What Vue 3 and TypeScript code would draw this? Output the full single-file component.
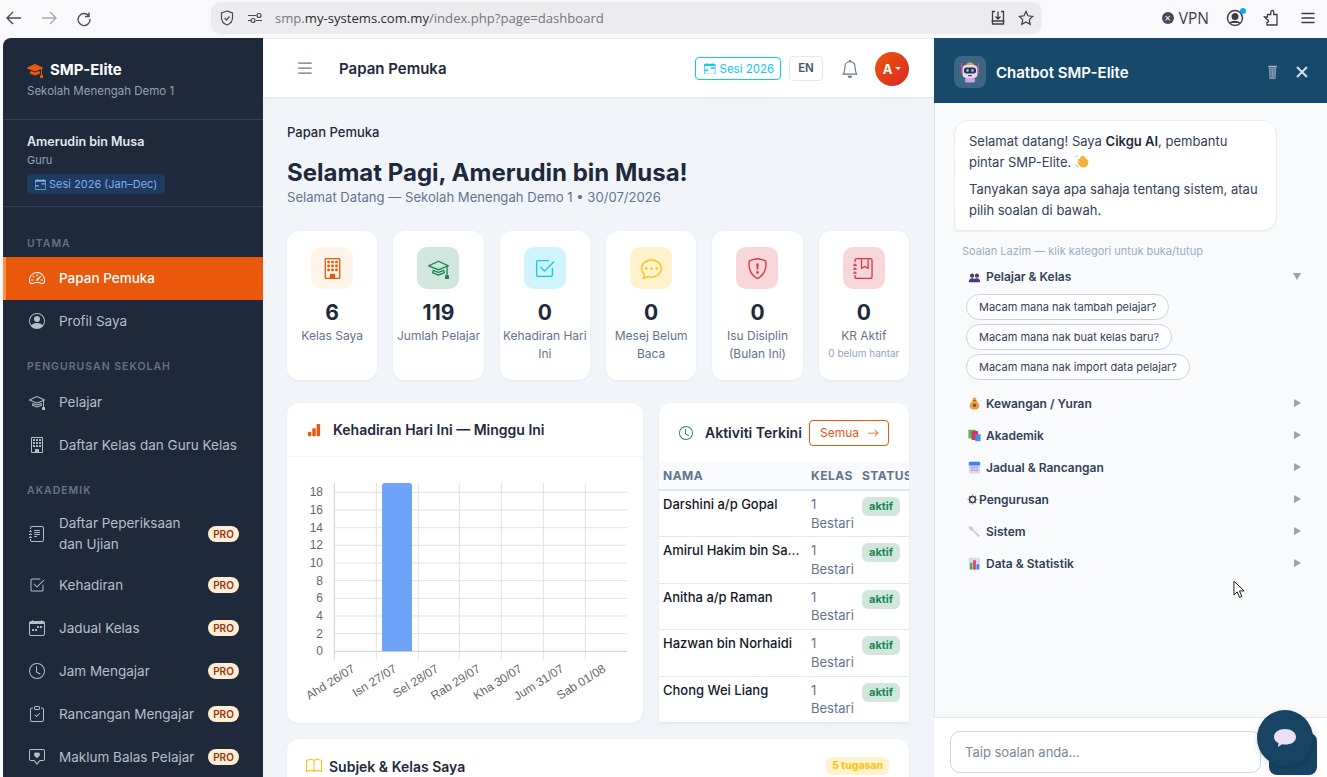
<script setup lang="ts">
// Bootstrap-style icon bodies, all on a 16x16 box
const icons: Record<string, string> = {
  speedometer: '<path d="M8 4a.5.5 0 0 1 .5.5V6a.5.5 0 0 1-1 0V4.5A.5.5 0 0 1 8 4M3.732 5.732a.5.5 0 0 1 .707 0l.915.914a.5.5 0 1 1-.708.708l-.914-.915a.5.5 0 0 1 0-.707M2 10a.5.5 0 0 1 .5-.5h1.586a.5.5 0 0 1 0 1H2.5A.5.5 0 0 1 2 10m9.5 0a.5.5 0 0 1 .5-.5h1.5a.5.5 0 0 1 0 1H12a.5.5 0 0 1-.5-.5m.754-4.246a.39.39 0 0 0-.527-.02L7.547 9.31a.91.91 0 1 0 1.302 1.258l3.434-4.297a.39.39 0 0 0-.029-.518z"/><path fill-rule="evenodd" d="M0 10a8 8 0 1 1 15.547 2.661c-.442 1.253-1.845 1.602-2.932 1.25C11.309 13.488 9.475 13 8 13c-1.474 0-3.31.488-4.615.911-1.087.352-2.49.003-2.932-1.25A8 8 0 0 1 0 10m8-7a7 7 0 0 0-6.603 9.329c.203.575.923.876 1.68.63C4.397 12.533 6.358 12 8 12s3.604.532 4.923.96c.757.245 1.477-.056 1.68-.631A7 7 0 0 0 8 3"/>',
  person: '<path d="M11 6a3 3 0 1 1-6 0 3 3 0 0 1 6 0"/><path fill-rule="evenodd" d="M0 8a8 8 0 1 1 16 0A8 8 0 0 1 0 8m8-7a7 7 0 0 0-5.468 11.37C3.242 11.226 4.805 10 8 10s4.757 1.225 5.468 2.37A7 7 0 0 0 8 1"/>',
  mortar: '<path d="M8.211 2.047a.5.5 0 0 0-.422 0l-7.5 3.5a.5.5 0 0 0 .025.917l7.5 3a.5.5 0 0 0 .372 0L14 7.14V13a1 1 0 0 0-1 1v2h3v-2a1 1 0 0 0-1-1V6.739l.686-.275a.5.5 0 0 0 .025-.917zM8 8.46 1.758 5.965 8 3.052l6.242 2.913z"/><path d="M4.176 9.032a.5.5 0 0 0-.656.327l-.5 1.7a.5.5 0 0 0 .294.605l4.5 1.8a.5.5 0 0 0 .372 0l4.5-1.8a.5.5 0 0 0 .294-.605l-.5-1.7a.5.5 0 0 0-.656-.327L8 10.466zm-.068 1.873.22-.748 3.496 1.311a.5.5 0 0 0 .352 0l3.496-1.311.22.748L8 12.46z"/>',
  mortarFill: '<path d="M8.211 2.047a.5.5 0 0 0-.422 0l-7.5 3.5a.5.5 0 0 0 .025.917l7.5 3a.5.5 0 0 0 .372 0L14 7.14V13a1 1 0 0 0-1 1v2h3v-2a1 1 0 0 0-1-1V6.739l.686-.275a.5.5 0 0 0 .025-.917z"/><path d="M4.176 9.032a.5.5 0 0 0-.656.327l-.5 1.7a.5.5 0 0 0 .294.605l4.5 1.8a.5.5 0 0 0 .372 0l4.5-1.8a.5.5 0 0 0 .294-.605l-.5-1.7a.5.5 0 0 0-.656-.327L8 10.466z"/>',
  building: '<path d="M4 2.5a.5.5 0 0 1 .5-.5h1a.5.5 0 0 1 .5.5v1a.5.5 0 0 1-.5.5h-1a.5.5 0 0 1-.5-.5zm3 0a.5.5 0 0 1 .5-.5h1a.5.5 0 0 1 .5.5v1a.5.5 0 0 1-.5.5h-1a.5.5 0 0 1-.5-.5zm3.5-.5a.5.5 0 0 0-.5.5v1a.5.5 0 0 0 .5.5h1a.5.5 0 0 0 .5-.5v-1a.5.5 0 0 0-.5-.5zM4 5.5a.5.5 0 0 1 .5-.5h1a.5.5 0 0 1 .5.5v1a.5.5 0 0 1-.5.5h-1a.5.5 0 0 1-.5-.5zM7.5 5a.5.5 0 0 0-.5.5v1a.5.5 0 0 0 .5.5h1a.5.5 0 0 0 .5-.5v-1a.5.5 0 0 0-.5-.5zm2.5.5a.5.5 0 0 1 .5-.5h1a.5.5 0 0 1 .5.5v1a.5.5 0 0 1-.5.5h-1a.5.5 0 0 1-.5-.5zM4.5 8a.5.5 0 0 0-.5.5v1a.5.5 0 0 0 .5.5h1a.5.5 0 0 0 .5-.5v-1a.5.5 0 0 0-.5-.5zm2.5.5a.5.5 0 0 1 .5-.5h1a.5.5 0 0 1 .5.5v1a.5.5 0 0 1-.5.5h-1a.5.5 0 0 1-.5-.5zm3.5-.5a.5.5 0 0 0-.5.5v1a.5.5 0 0 0 .5.5h1a.5.5 0 0 0 .5-.5v-1a.5.5 0 0 0-.5-.5z"/><path d="M2 1a1 1 0 0 1 1-1h10a1 1 0 0 1 1 1v14a1 1 0 0 1-1 1H3a1 1 0 0 1-1-1zm11 0H3v14h3v-2.5a.5.5 0 0 1 .5-.5h3a.5.5 0 0 1 .5.5V15h3z"/>',
  journalText: '<path d="M5 10.5a.5.5 0 0 1 .5-.5h2a.5.5 0 0 1 0 1h-2a.5.5 0 0 1-.5-.5m0-2a.5.5 0 0 1 .5-.5h5a.5.5 0 0 1 0 1h-5a.5.5 0 0 1-.5-.5m0-2a.5.5 0 0 1 .5-.5h5a.5.5 0 0 1 0 1h-5a.5.5 0 0 1-.5-.5m0-2a.5.5 0 0 1 .5-.5h5a.5.5 0 0 1 0 1h-5a.5.5 0 0 1-.5-.5"/><path d="M3 0h10a2 2 0 0 1 2 2v12a2 2 0 0 1-2 2H3a2 2 0 0 1-2-2v-1h1v1a1 1 0 0 0 1 1h10a1 1 0 0 0 1-1V2a1 1 0 0 0-1-1H3a1 1 0 0 0-1 1v1H1V2a2 2 0 0 1 2-2"/><path d="M1 5v-.5a.5.5 0 0 1 1 0V5h.5a.5.5 0 0 1 0 1h-2a.5.5 0 0 1 0-1zm0 3v-.5a.5.5 0 0 1 1 0V8h.5a.5.5 0 0 1 0 1h-2a.5.5 0 0 1 0-1zm0 3v-.5a.5.5 0 0 1 1 0v.5h.5a.5.5 0 0 1 0 1h-2a.5.5 0 0 1 0-1z"/>',
  journalMark: '<path fill-rule="evenodd" d="M6 8V1h1v6.117L8.743 6.07a.5.5 0 0 1 .514 0L11 7.117V1h1v7a.5.5 0 0 1-.757.429L9 7.083 6.757 8.43A.5.5 0 0 1 6 8"/><path d="M3 0h10a2 2 0 0 1 2 2v12a2 2 0 0 1-2 2H3a2 2 0 0 1-2-2v-1h1v1a1 1 0 0 0 1 1h10a1 1 0 0 0 1-1V2a1 1 0 0 0-1-1H3a1 1 0 0 0-1 1v1H1V2a2 2 0 0 1 2-2"/><path d="M1 5v-.5a.5.5 0 0 1 1 0V5h.5a.5.5 0 0 1 0 1h-2a.5.5 0 0 1 0-1zm0 3v-.5a.5.5 0 0 1 1 0V8h.5a.5.5 0 0 1 0 1h-2a.5.5 0 0 1 0-1zm0 3v-.5a.5.5 0 0 1 1 0v.5h.5a.5.5 0 0 1 0 1h-2a.5.5 0 0 1 0-1z"/>',
  checkSquare: '<path d="M3 14.5A1.5 1.5 0 0 1 1.5 13V3A1.5 1.5 0 0 1 3 1.5h8a.5.5 0 0 1 0 1H3a.5.5 0 0 0-.5.5v10a.5.5 0 0 0 .5.5h10a.5.5 0 0 0 .5-.5V8a.5.5 0 0 1 1 0v5a1.5 1.5 0 0 1-1.5 1.5z"/><path d="m8.354 10.354 7-7a.5.5 0 0 0-.708-.708L8 9.293 5.354 6.646a.5.5 0 1 0-.708.708l3 3a.5.5 0 0 0 .708 0"/>',
  calWeek: '<path d="M11 6.5a.5.5 0 0 1 .5-.5h1a.5.5 0 0 1 .5.5v1a.5.5 0 0 1-.5.5h-1a.5.5 0 0 1-.5-.5zm-3 0a.5.5 0 0 1 .5-.5h1a.5.5 0 0 1 .5.5v1a.5.5 0 0 1-.5.5h-1a.5.5 0 0 1-.5-.5zm-5 3a.5.5 0 0 1 .5-.5h1a.5.5 0 0 1 .5.5v1a.5.5 0 0 1-.5.5h-1a.5.5 0 0 1-.5-.5zm3 0a.5.5 0 0 1 .5-.5h1a.5.5 0 0 1 .5.5v1a.5.5 0 0 1-.5.5h-1a.5.5 0 0 1-.5-.5z"/><path d="M3.5 0a.5.5 0 0 1 .5.5V1h8V.5a.5.5 0 0 1 1 0V1h1a2 2 0 0 1 2 2v11a2 2 0 0 1-2 2H2a2 2 0 0 1-2-2V3a2 2 0 0 1 2-2h1V.5a.5.5 0 0 1 .5-.5M1 4v10a1 1 0 0 0 1 1h12a1 1 0 0 0 1-1V4z"/>',
  calRange: '<path d="M9 7a1 1 0 0 1 1-1h5v2h-5a1 1 0 0 1-1-1M1 9h4a1 1 0 0 1 0 2H1z"/><path d="M3.5 0a.5.5 0 0 1 .5.5V1h8V.5a.5.5 0 0 1 1 0V1h1a2 2 0 0 1 2 2v11a2 2 0 0 1-2 2H2a2 2 0 0 1-2-2V3a2 2 0 0 1 2-2h1V.5a.5.5 0 0 1 .5-.5M1 4v10a1 1 0 0 0 1 1h12a1 1 0 0 0 1-1V4z"/>',
  clock: '<path d="M8 3.5a.5.5 0 0 0-1 0V9a.5.5 0 0 0 .252.434l3.5 2a.5.5 0 0 0 .496-.868L8 8.71z"/><path d="M8 16A8 8 0 1 0 8 0a8 8 0 0 0 0 16m7-8A7 7 0 1 1 1 8a7 7 0 0 1 14 0"/>',
  clipboard: '<path fill-rule="evenodd" d="M10.854 7.146a.5.5 0 0 1 0 .708l-3 3a.5.5 0 0 1-.708 0l-1.5-1.5a.5.5 0 1 1 .708-.708L7.5 9.793l2.646-2.647a.5.5 0 0 1 .708 0"/><path d="M4 1.5H3a2 2 0 0 0-2 2V14a2 2 0 0 0 2 2h10a2 2 0 0 0 2-2V3.5a2 2 0 0 0-2-2h-1v1h1a1 1 0 0 1 1 1V14a1 1 0 0 1-1 1H3a1 1 0 0 1-1-1V3.5a1 1 0 0 1 1-1h1z"/><path d="M9.5 1a.5.5 0 0 1 .5.5v1a.5.5 0 0 1-.5.5h-3a.5.5 0 0 1-.5-.5v-1a.5.5 0 0 1 .5-.5zm-3-1A1.5 1.5 0 0 0 5 1.5v1A1.5 1.5 0 0 0 6.5 4h3A1.5 1.5 0 0 0 11 2.5v-1A1.5 1.5 0 0 0 9.5 0z"/>',
  chatHeart: '<path d="M14 1a1 1 0 0 1 1 1v8a1 1 0 0 1-1 1h-2.5a2 2 0 0 0-1.6.8L8 14.333 6.1 11.8a2 2 0 0 0-1.6-.8H2a1 1 0 0 1-1-1V2a1 1 0 0 1 1-1zM2 0a2 2 0 0 0-2 2v8a2 2 0 0 0 2 2h2.5a1 1 0 0 1 .8.4l1.9 2.533a1 1 0 0 0 1.6 0l1.9-2.533a1 1 0 0 1 .8-.4H14a2 2 0 0 0 2-2V2a2 2 0 0 0-2-2z"/><path d="M8 3.993c1.664-1.711 5.825 1.283 0 5.132-5.825-3.85-1.664-6.843 0-5.132"/>',
  chatDots: '<path d="M5 8a1 1 0 1 1-2 0 1 1 0 0 1 2 0m4 0a1 1 0 1 1-2 0 1 1 0 0 1 2 0m3 1a1 1 0 1 0 0-2 1 1 0 0 0 0 2"/><path d="m2.165 15.803.02-.004c1.83-.363 2.948-.842 3.468-1.105A9 9 0 0 0 8 15c4.418 0 8-3.134 8-7s-3.582-7-8-7-8 3.134-8 7c0 1.76.743 3.37 1.97 4.6a10.4 10.4 0 0 1-.524 2.318l-.003.011a11 11 0 0 1-.244.637c-.079.186.074.394.273.362a22 22 0 0 0 .693-.125m.8-3.108a1 1 0 0 0-.287-.801C1.618 10.83 1 9.468 1 8c0-3.192 3.004-6 7-6s7 2.808 7 6-3.004 6-7 6a8 8 0 0 1-2.088-.272 1 1 0 0 0-.711.074c-.387.196-1.24.57-2.634.893a11 11 0 0 0 .398-2"/>',
  shield: '<path d="M5.338 1.59a61 61 0 0 0-2.837.856.48.48 0 0 0-.328.39c-.554 4.157.726 7.19 2.253 9.188a10.7 10.7 0 0 0 2.287 2.233c.346.244.652.42.893.533q.18.085.293.118a1 1 0 0 0 .101.025 1 1 0 0 0 .1-.025q.114-.034.294-.118c.24-.113.547-.29.893-.533a10.7 10.7 0 0 0 2.287-2.233c1.527-1.997 2.807-5.031 2.253-9.188a.48.48 0 0 0-.328-.39c-.651-.213-1.75-.56-2.837-.855C9.552 1.29 8.531 1.067 8 1.067c-.53 0-1.552.223-2.662.524zM5.072.56C6.157.265 7.31 0 8 0s1.843.265 2.928.56c1.11.3 2.229.655 2.887.87a1.54 1.54 0 0 1 1.044 1.262c.596 4.477-.787 7.795-2.465 9.99a11.8 11.8 0 0 1-2.517 2.453 7 7 0 0 1-1.048.625c-.28.132-.581.24-.829.24s-.548-.108-.829-.24a7 7 0 0 1-1.048-.625 11.8 11.8 0 0 1-2.517-2.453C1.928 10.487.545 7.169 1.141 2.692A1.54 1.54 0 0 1 2.185 1.43 63 63 0 0 1 5.072.56"/><path d="M7.001 11a1 1 0 1 1 2 0 1 1 0 0 1-2 0M7.1 4.995a.905.905 0 1 1 1.8 0l-.35 3.507a.553.553 0 0 1-1.1 0z"/>',
  bell: '<path d="M8 16a2 2 0 0 0 2-2H6a2 2 0 0 0 2 2M8 1.918l-.797.161A4 4 0 0 0 4 6c0 .628-.134 2.197-.459 3.742-.16.767-.376 1.566-.663 2.258h10.244c-.287-.692-.502-1.49-.663-2.258C12.134 8.197 12 6.628 12 6a4 4 0 0 0-3.203-3.92zM14.22 12c.223.447.481.801.78 1H1c.299-.199.557-.553.78-1C2.68 10.2 3 6.88 3 6c0-2.42 1.72-4.44 4.005-4.901a1 1 0 1 1 1.99 0A5 5 0 0 1 13 6c0 .88.32 4.2 1.22 6"/>',
  list: '<path fill-rule="evenodd" d="M2.5 12a.5.5 0 0 1 .5-.5h10a.5.5 0 0 1 0 1H3a.5.5 0 0 1-.5-.5m0-4a.5.5 0 0 1 .5-.5h10a.5.5 0 0 1 0 1H3a.5.5 0 0 1-.5-.5m0-4a.5.5 0 0 1 .5-.5h10a.5.5 0 0 1 0 1H3a.5.5 0 0 1-.5-.5"/>',
  bars: '<path d="M1 11a1 1 0 0 1 1-1h2a1 1 0 0 1 1 1v3a1 1 0 0 1-1 1H2a1 1 0 0 1-1-1zm5-4a1 1 0 0 1 1-1h2a1 1 0 0 1 1 1v7a1 1 0 0 1-1 1H7a1 1 0 0 1-1-1zm5-5a1 1 0 0 1 1-1h2a1 1 0 0 1 1 1v12a1 1 0 0 1-1 1h-2a1 1 0 0 1-1-1z"/>',
  book: '<path d="M1 2.828c.885-.37 2.154-.769 3.388-.893 1.33-.134 2.458.063 3.112.752v9.746c-.935-.53-2.12-.603-3.213-.493-1.18.12-2.37.461-3.287.811zm7.5-.141c.654-.689 1.782-.886 3.112-.752 1.234.124 2.503.523 3.388.893v9.923c-.918-.35-2.107-.692-3.287-.81-1.094-.111-2.278-.039-3.213.492zM8 1.783C7.015.936 5.587.81 4.287.94c-1.514.153-3.042.672-3.994 1.105A.5.5 0 0 0 0 2.5v11a.5.5 0 0 0 .707.455c.882-.4 2.303-.881 3.68-1.02 1.409-.142 2.59.087 3.223.877a.5.5 0 0 0 .78 0c.633-.79 1.814-1.019 3.222-.877 1.378.139 2.8.62 3.681 1.02A.5.5 0 0 0 16 13.5v-11a.5.5 0 0 0-.293-.455c-.952-.433-2.48-.952-3.994-1.105C10.413.809 8.985.936 8 1.783"/>',
  arrow: '<path fill-rule="evenodd" d="M1 8a.5.5 0 0 1 .5-.5h11.793l-3.147-3.146a.5.5 0 0 1 .708-.708l4 4a.5.5 0 0 1 0 .708l-4 4a.5.5 0 0 1-.708-.708L13.293 8.5H1.5A.5.5 0 0 1 1 8"/>',
  // hand-drawn stand-ins for the colour emoji
  people: '<circle cx="5" cy="7" r="2.6" fill="#4c3a75"/><circle cx="11" cy="7" r="2.6" fill="#4c3a75"/><path d="M1 15c0-3.500 1.600-5 4-5 1.500 0 2.500.6 3 1.500.5-.9 1.500-1.500 3-1.500 2.400 0 4 1.500 4 5z" fill="#4c3a75"/>',
  money: '<path d="M5.500 1h5L9.400 4.200c2.700 1.400 4.600 4.200 4.600 6.800 0 3-2.700 4.500-6 4.500s-6-1.500-6-4.500c0-2.600 1.900-5.400 4.600-6.800z" fill="#ee9d42"/><rect x="5.600" y="3.600" width="4.800" height="1.300" fill="#a8641d"/><circle cx="8" cy="10.300" r="2.200" fill="#8a5518"/>',
  books: '<rect x="0.500" y="1" width="9" height="10.500" fill="#58b85c"/><rect x="4.500" y="2.500" width="8" height="11" fill="#d9365f"/><rect x="9" y="6.500" width="6.500" height="8.500" fill="#4a90e2"/>',
  calendar: '<rect x="1" y="1" width="14" height="14.500" rx="2" fill="#dcd6f0"/><rect x="1" y="1" width="14" height="4.500" rx="1.500" fill="#3b82f6"/><g fill="#a59bc9"><rect x="3.500" y="7" width="2.400" height="1.800"/><rect x="6.800" y="7" width="2.400" height="1.800"/><rect x="10.100" y="7" width="2.400" height="1.800"/><rect x="3.500" y="10.500" width="2.400" height="1.800"/><rect x="6.800" y="10.500" width="2.400" height="1.800"/><rect x="10.100" y="10.500" width="2.400" height="1.800"/></g>',
  gear: '<circle cx="8" cy="8" r="4.300" fill="none" stroke="#1e3a5f" stroke-width="2.200"/><path d="M8 .8v2.700M8 12.500v2.700M.8 8h2.700M12.500 8h2.700M2.900 2.900l1.900 1.900M11.200 11.200l1.900 1.900M2.900 13.100l1.900-1.900M11.200 4.800l1.900-1.900" stroke="#b5703a" stroke-width="1.700"/>',
  wrench: '<path d="M2 1 5.800 2.800l.8 3 8 7.200-1.900 2-7.400-8-3-.7L.6 3z" fill="#cfc8e6"/>',
  chart: '<rect x="1" y="1" width="14" height="14.500" rx="1" fill="#dedbe8"/><rect x="2.300" y="7" width="3.200" height="8.500" fill="#4caf50"/><rect x="6.400" y="4" width="3.200" height="11.500" fill="#e0356a"/><rect x="10.500" y="9" width="3.200" height="6.500" fill="#3b82f6"/>',
}

type NavItem = { icon: string; label: string; pro?: boolean; active?: boolean; two?: boolean }
type NavGroup = { title: string; items: NavItem[] }

const navGroups: NavGroup[] = [
  {
    title: 'UTAMA',
    items: [
      { icon: 'speedometer', label: 'Papan Pemuka', active: true },
      { icon: 'person', label: 'Profil Saya' },
    ],
  },
  {
    title: 'PENGURUSAN SEKOLAH',
    items: [
      { icon: 'mortar', label: 'Pelajar' },
      { icon: 'building', label: 'Daftar Kelas dan Guru Kelas' },
    ],
  },
  {
    title: 'AKADEMIK',
    items: [
      { icon: 'journalText', label: 'Daftar Peperiksaan dan Ujian', pro: true, two: true },
      { icon: 'checkSquare', label: 'Kehadiran', pro: true },
      { icon: 'calWeek', label: 'Jadual Kelas', pro: true },
      { icon: 'clock', label: 'Jam Mengajar', pro: true },
      { icon: 'clipboard', label: 'Rancangan Mengajar', pro: true },
      { icon: 'chatHeart', label: 'Maklum Balas Pelajar', pro: true },
    ],
  },
]

const stats = [
  { icon: 'building', value: '6', label: 'Kelas Saya', tile: '#fff4ea', color: '#ea580c' },
  { icon: 'mortar', value: '119', label: 'Jumlah Pelajar', tile: '#d1e7dd', color: '#198754' },
  { icon: 'checkSquare', value: '0', label: 'Kehadiran Hari Ini', tile: '#cff4fc', color: '#0dcaf0' },
  { icon: 'chatDots', value: '0', label: 'Mesej Belum Baca', tile: '#fff3cd', color: '#ffc107' },
  { icon: 'shield', value: '0', label: 'Isu Disiplin (Bulan Ini)', tile: '#f8d7da', color: '#dc3545' },
  { icon: 'journalMark', value: '0', label: 'KR Aktif', note: '0 belum hantar', tile: '#f8d7da', color: '#dc3545' },
]

const students = ['Darshini a/p Gopal', 'Amirul Hakim bin Sa...', 'Anitha a/p Raman', 'Hazwan bin Norhaidi', 'Chong Wei Liang']

const categories = [
  { icon: 'money', label: 'Kewangan / Yuran' },
  { icon: 'books', label: 'Akademik' },
  { icon: 'calendar', label: 'Jadual & Rancangan' },
  { icon: 'gear', label: 'Pengurusan', tight: true },
  { icon: 'wrench', label: 'Sistem' },
  { icon: 'chart', label: 'Data & Statistik' },
]

const questions = ['Macam mana nak tambah pelajar?', 'Macam mana nak buat kelas baru?', 'Macam mana nak import data pelajar?']

// chart geometry, in px inside the 356x266 svg
const axisY = 194.3
const unit = 8.83
const yTicks = [0, 2, 4, 6, 8, 10, 12, 14, 16, 18]
const xGrid = [47.3, 89.3, 131.3, 172.3, 214.3, 256.3, 298.3]
const days = ['Ahd 26/07', 'Isn 27/07', 'Sel 28/07', 'Rab 29/07', 'Kha 30/07', 'Jum 31/07', 'Sab 01/08']
</script>

<template>
  <div class="screen">
    <header class="browser">
      <svg class="tb" viewBox="0 0 18 18" fill="none" stroke="#4a4a55" stroke-width="1.4"><path d="M16 9H2M8 3 2 9l6 6" /></svg>
      <svg class="tb" viewBox="0 0 18 18" fill="none" stroke="#a9a9b0" stroke-width="1.4"><path d="M2 9h14M10 3l6 6-6 6" /></svg>
      <svg class="tb" viewBox="0 0 18 18" fill="none" stroke="#4a4a55" stroke-width="1.4"><path d="M14 3.500V7.500H10M14 7.200A6 6 0 1 0 15 10" /></svg>
      <div class="urlbar">
        <svg class="url-ic" viewBox="0 0 16 16" fill="none" stroke="#4a4a55" stroke-width="1.2"><path d="M8 1 2.500 3v4.500C2.500 11 5 14 8 15c3-1 5.500-4 5.500-7.500V3z" /><path d="m5.500 8 2 2 3-3.500" /></svg>
        <svg class="url-ic" viewBox="0 0 16 16" fill="none" stroke="#4a4a55" stroke-width="1.200"><path d="M1 5.500h8.500M1 10.500h3M9 10.500h6" /><circle cx="12" cy="5.500" r="2" /><circle cx="6" cy="10.500" r="2" /></svg>
        <span class="url">smp.<b>my-systems.com.my</b>/index.php?page=dashboard</span>
        <svg class="url-ic end" viewBox="0 0 16 16" fill="none" stroke="#3c3c45" stroke-width="1.300"><path d="M5 1.500H2.500v12.500h11V1.500H11M1.500 11h13M8 1.500v7M5.500 6.500 8 9l2.500-2.500" /></svg>
        <svg class="url-ic" viewBox="0 0 16 16" fill="none" stroke="#3c3c45" stroke-width="1.200"><path d="m8 1.500 2 4.300 4.700.6-3.400 3.200.9 4.700L8 12l-4.200 2.300.9-4.700L1.300 6.400 6 5.800z" /></svg>
      </div>
      <div class="tools">
        <span class="vpn"><i class="vpn-x">×</i>VPN</span>
        <span class="prof">
          <svg class="tb" viewBox="0 0 18 18" fill="none" stroke="#3c3c45" stroke-width="1.400"><circle cx="9" cy="9" r="7.500" /><circle cx="9" cy="7.500" r="2.800" fill="#3c3c45" /><path d="M4.500 14c1-2 7.500-2 9 0" fill="#3c3c45" /></svg>
          <i class="prof-dot"></i>
        </span>
        <svg class="tb puzzle" viewBox="0 0 18 18" fill="none" stroke="#3c3c45" stroke-width="1.300"><path d="M2.500 8h3V5.500h3.300V3c0-2 3-2 3 0v2.500H15V16H5v-2.500c2 0 2-3 0-3z" /></svg>
        <svg class="tb menu" viewBox="0 0 18 18" fill="none" stroke="#3c3c45" stroke-width="1.300"><path d="M2.500 4.500h13M2.500 9h13M2.500 13.500h13" /></svg>
      </div>
    </header>

    <div class="desk">
      <aside class="sidebar">
        <div class="brand">
          <div class="brand-name">
            <svg class="bi logo" viewBox="0 0 16 16" fill="currentColor" v-html="icons.mortarFill"></svg>
            SMP-Elite
          </div>
          <div class="brand-sub">Sekolah Menengah Demo 1</div>
        </div>
        <div class="user">
          <div class="user-name">Amerudin bin Musa</div>
          <div class="user-role">Guru</div>
          <span class="user-sesi">
            <svg class="bi" viewBox="0 0 16 16" fill="currentColor" v-html="icons.calRange"></svg>
            Sesi 2026 (Jan–Dec)
          </span>
        </div>
        <nav class="nav">
          <section v-for="group in navGroups" :key="group.title">
            <div class="nav-title">{{ group.title }}</div>
            <a
              v-for="item in group.items"
              :key="item.label"
              class="nav-item"
              :class="{ active: item.active, two: item.two }"
            >
              <svg class="bi nav-ic" viewBox="0 0 16 16" fill="currentColor" v-html="icons[item.icon]"></svg>
              <span class="nav-label">{{ item.label }}</span>
              <span v-if="item.pro" class="pro">PRO</span>
            </a>
          </section>
        </nav>
      </aside>

      <main class="main">
        <div class="topbar">
          <svg class="bi burger" viewBox="0 0 16 16" fill="currentColor" v-html="icons.list"></svg>
          <h1 class="top-title">Papan Pemuka</h1>
          <div class="top-actions">
            <span class="sesi-btn">
              <svg class="bi" viewBox="0 0 16 16" fill="currentColor" v-html="icons.calRange"></svg>
              Sesi 2026
            </span>
            <span class="lang">EN</span>
            <svg class="bi bell" viewBox="0 0 16 16" fill="currentColor" v-html="icons.bell"></svg>
            <span class="avatar">A<i class="caret"></i></span>
          </div>
        </div>

        <div class="content">
          <div class="crumb">Papan Pemuka</div>
          <h2 class="greet">Selamat Pagi, Amerudin bin Musa!</h2>
          <p class="greet-sub">Selamat Datang — Sekolah Menengah Demo 1 • 30/07/2026</p>

          <div class="stats">
            <div v-for="s in stats" :key="s.label" class="stat">
              <div class="stat-tile" :style="{ background: s.tile, color: s.color }">
                <svg class="bi" viewBox="0 0 16 16" fill="currentColor" v-html="icons[s.icon]"></svg>
              </div>
              <div class="stat-value">{{ s.value }}</div>
              <div class="stat-label">{{ s.label }}</div>
              <div v-if="s.note" class="stat-note">{{ s.note }}</div>
            </div>
          </div>

          <div class="row">
            <div class="panel">
              <div class="panel-head chart-head">
                <svg class="bi bars" viewBox="0 0 16 16" fill="currentColor" v-html="icons.bars"></svg>
                <h3>Kehadiran Hari Ini — Minggu Ini</h3>
              </div>
              <svg class="chart" width="356" height="266" viewBox="0 0 356 266">
                <line v-for="t in yTicks.slice(1)" :key="t" x1="47.300" x2="340" :y1="axisY - t * unit" :y2="axisY - t * unit" stroke="#e2e2e2" />
                <line v-for="x in xGrid.slice(1)" :key="x" :x1="x" :x2="x" y1="26" y2="202.500" stroke="#e2e2e2" />
                <line x1="47.300" x2="47.300" y1="26" y2="202.500" stroke="#cfcfcf" />
                <line x1="47.300" x2="340" :y1="axisY" :y2="axisY" stroke="#cfcfcf" />
                <path d="M95 194.300V29a3 3 0 0 1 3-3h24a3 3 0 0 1 3 3v165.300z" fill="#6fa3f7" />
                <text v-for="t in yTicks" :key="t" x="36" :y="axisY - t * unit + 4" text-anchor="end" class="tick">{{ t }}</text>
                <text
                  v-for="(d, i) in days"
                  :key="d"
                  :x="68.700 + i * 41.800"
                  y="214"
                  text-anchor="end"
                  class="tick"
                  :transform="`rotate(-32 ${68.7 + i * 41.8} 214)`"
                >{{ d }}</text>
              </svg>
            </div>

            <div class="panel activity">
              <div class="panel-head act-head">
                <svg class="bi act-ic" viewBox="0 0 16 16" fill="currentColor" v-html="icons.clock"></svg>
                <h3>Aktiviti Terkini</h3>
                <span class="semua">Semua
                  <svg class="bi" viewBox="0 0 16 16" fill="currentColor" v-html="icons.arrow"></svg>
                </span>
              </div>
              <table class="tbl">
                <thead>
                  <tr><th class="c-name">NAMA</th><th class="c-kelas">KELAS</th><th class="c-status">STATUS</th></tr>
                </thead>
                <tbody>
                  <tr v-for="name in students" :key="name">
                    <td class="name">{{ name }}</td>
                    <td class="kelas">1 Bestari</td>
                    <td><span class="aktif">aktif</span></td>
                  </tr>
                </tbody>
              </table>
            </div>
          </div>

          <div class="panel subjects">
            <svg class="bi book" viewBox="0 0 16 16" fill="currentColor" v-html="icons.book"></svg>
            <h3>Subjek &amp; Kelas Saya</h3>
            <span class="tugasan">5 tugasan</span>
          </div>
        </div>
      </main>

      <aside class="chat">
        <div class="chat-head">
          <span class="bot">
            <svg viewBox="0 0 24 24" width="24" height="24">
              <path d="M3.500 3v10M20.500 3v10" stroke="#e0457e" stroke-width="1.200" />
              <path d="M8 5.500c0-4 8-4 8 0z" fill="#e8a93a" />
              <rect x="4.500" y="5" width="15" height="13" rx="4" fill="#e9d8ee" />
              <rect x="6" y="7.500" width="12" height="6" rx="2.500" fill="#2f2d48" />
              <circle cx="9.500" cy="10.500" r="1.400" fill="#6fc3ef" />
              <circle cx="14.500" cy="10.500" r="1.400" fill="#6fc3ef" />
              <rect x="10" y="15" width="4" height="1.200" fill="#4a4668" />
              <rect x="7" y="18" width="10" height="4.500" rx="1.500" fill="#c9a6d8" />
            </svg>
          </span>
          <span class="chat-title">Chatbot SMP-Elite</span>
          <svg class="trash" viewBox="0 0 12 16" width="11" height="15">
            <rect x="1" y="0.500" width="10" height="2" rx="1" fill="#9fb1bf" />
            <path d="M2 3h8l-.6 12H2.600z" fill="#7b95a8" />
            <path d="M4.500 4v10M7.500 4v10" stroke="#51738a" />
          </svg>
          <svg class="close" viewBox="0 0 12 12" width="12" height="12" fill="none" stroke="#d5e0e8" stroke-width="2"><path d="m1 1 10 10M11 1 1 11" /></svg>
        </div>

        <div class="chat-body">
          <div class="bubble">
            <p>Selamat datang! Saya <b>Cikgu AI</b>, pembantu pintar SMP-Elite.
              <svg class="wave" viewBox="0 0 16 16" width="15" height="15"><path d="M6 3 8 1.500l2 1.200L14 7c1 3.500-1 7.500-5 7.500-3 0-4.500-2-6.500-5.500l1-1 1.500 1L2.800 6l1-1 1 .5z" fill="#f5b13c" /><path d="M.8 11c.5 1.500 1.500 2.500 3 3M3 1.500C2 2 1.500 2.500 1 3.500" stroke="#8fb8e8" fill="none" /></svg>
            </p>
            <p>Tanyakan saya apa sahaja tentang sistem, atau pilih soalan di bawah.</p>
          </div>
          <div class="faq-title">Soalan Lazim — klik kategori untuk buka/tutup</div>

          <div class="cat first">
            <svg class="emoji" viewBox="0 0 16 16" v-html="icons.people"></svg>
            <span class="cat-label">Pelajar &amp; Kelas</span>
            <i class="tri down"></i>
          </div>
          <div class="chips">
            <span v-for="q in questions" :key="q" class="chip">{{ q }}</span>
          </div>

          <div v-for="c in categories" :key="c.label" class="cat" :class="{ tight: c.tight }">
            <svg class="emoji" viewBox="0 0 16 16" v-html="icons[c.icon]"></svg>
            <span class="cat-label">{{ c.label }}</span>
            <i class="tri"></i>
          </div>
        </div>

        <div class="composer">
          <div class="input">Taip soalan anda...</div>
          <div class="send"></div>
        </div>

        <div class="fab">
          <svg viewBox="0 0 24 20" width="24" height="20"><path d="M12 1c6 0 11 3 11 8s-5 7.500-11 7.500c-1 0-2 0-3-.2L5 19l.5-4C2.500 13.800 1 11.500 1 9c0-5 5-8 11-8z" fill="#eadff5" /></svg>
        </div>
        <svg class="cursor" viewBox="0 0 14 20" width="13" height="19"><path d="M1 1v15l3.500-3.500 2.500 6 2.500-1-2.500-6H12z" fill="#fff" stroke="#111" stroke-width="1" /></svg>
      </aside>
    </div>
  </div>
</template>

<style>
html,
body {
  margin: 0;
  overflow: hidden;
}
</style>

<style scoped>
* {
  box-sizing: border-box;
}

.screen {
  width: 1327px;
  height: 777px;
  overflow: hidden;
  display: flex;
  flex-direction: column;
  background: #f9f9fb;
  font-family: Inter, "Liberation Sans", sans-serif;
  color: #1e293b;
}

h1,
h2,
h3,
p {
  margin: 0;
}

.bi {
  display: block;
  width: 1em;
  height: 1em;
  flex: none;
}

/* browser toolbar */
.browser {
  height: 38px;
  flex: none;
  display: flex;
  align-items: center;
  padding: 0 10px 2px 5px;
}

.tb {
  width: 18px;
  height: 18px;
  flex: none;
  margin-right: 17px;
}

.browser .tb:nth-child(3) {
  margin-right: 0;
}

.urlbar {
  width: 831px;
  height: 32px;
  margin-left: 118px;
  border-radius: 10px;
  background: #ececee;
  display: flex;
  align-items: center;
  padding: 0 8px;
  gap: 12px;
}

.url-ic {
  width: 16px;
  height: 16px;
  flex: none;
}

.url {
  font-family: "Open Sans", sans-serif;
  font-size: 13.1px;
  color: #75757f;
  flex: 1;
}

.url b {
  font-weight: 400;
  color: #2b2b33;
}

.tools {
  display: flex;
  align-items: center;
  margin-left: auto;
}

.tools .tb {
  margin-right: 0;
}

.tools .puzzle {
  margin-left: 18px;
}

.tools .menu {
  margin-left: 19px;
}

.prof {
  position: relative;
  display: block;
  margin-left: 17px;
  height: 18px;
}

.vpn {
  display: flex;
  align-items: center;
  gap: 5px;
  font-family: "Open Sans", sans-serif;
  font-size: 15.5px;
  color: #3c3c45;
}

.vpn-x {
  width: 12px;
  height: 12px;
  border-radius: 50%;
  background: #4a4a55;
  color: #fff;
  font-style: normal;
  font-size: 11px;
  line-height: 12px;
  text-align: center;
}

.prof-dot {
  position: absolute;
  right: -2px;
  top: -1px;
  width: 6px;
  height: 6px;
  border-radius: 50%;
  background: #12a5f0;
}

.desk {
  flex: 1;
  min-height: 0;
  display: flex;
  padding-left: 3px;
  position: relative;
}

/* sidebar */
.sidebar {
  width: 260px;
  flex: none;
  background: #1e293b;
  border-top-left-radius: 8px;
  overflow: hidden;
  color: #cbd5e1;
}

.brand {
  height: 82px;
  padding: 23px 24px 0;
  border-bottom: 1px solid #334155;
}

.brand-name {
  display: flex;
  align-items: center;
  gap: 7px;
  font-size: 15px;
  font-weight: 700;
  line-height: 18px;
  color: #fff;
}

.logo {
  font-size: 16px;
  color: #ea580c;
}

.brand-sub {
  margin-top: 4px;
  font-size: 11.5px;
  line-height: 16px;
  color: #94a3b8;
}

.user {
  height: 87px;
  padding: 13px 24px 0;
  border-bottom: 1px solid #334155;
}

.user-name {
  font-size: 12.5px;
  font-weight: 600;
  line-height: 18px;
  color: #e2e8f0;
}

.user-role {
  font-size: 11px;
  line-height: 18px;
  color: #94a3b8;
}

.user-sesi {
  display: inline-flex;
  align-items: center;
  gap: 3px;
  height: 20px;
  margin-top: 5px;
  padding: 0 8px;
  border-radius: 5px;
  background: #1e3a5f;
  color: #7fb0ef;
  font-size: 11px;
}

.nav-title {
  height: 14px;
  margin: 17px 0 7px;
  padding-left: 24px;
  font-size: 10.5px;
  font-weight: 600;
  line-height: 14px;
  letter-spacing: 1px;
  color: #64748b;
}

section:first-child .nav-title {
  margin-top: 30px;
  margin-bottom: 6px;
}

.nav-item {
  display: flex;
  align-items: center;
  padding: 11px 24px 12px 23px;
  border-left: 3px solid transparent;
  font-size: 13.5px;
  line-height: 20px;
  color: #b4bfcd;
}

.nav-item.two {
  line-height: 21px;
  padding-top: 8px;
  padding-bottom: 9px;
}

.nav-item.active {
  background: #ea580c;
  border-left-color: #fb923c;
  color: #fff;
  font-weight: 500;
}

.nav-ic {
  font-size: 16px;
  margin-right: 14px;
}

.nav-label {
  flex: 1;
  min-width: 0;
}

.two .nav-label {
  padding-right: 12px;
}

.pro {
  flex: none;
  width: 31px;
  height: 16px;
  border-radius: 8px;
  background: #ffedd5;
  color: #9a3412;
  font-size: 10px;
  font-weight: 600;
  line-height: 16px;
  text-align: center;
}

/* main column */
.main {
  width: 671px;
  flex: none;
  background: #f1f5f9;
  overflow: hidden;
}

.topbar {
  height: 60px;
  padding: 0 25px 0 32px;
  display: flex;
  align-items: center;
  background: #fff;
  border-top: 1px solid #e5e7eb;
  border-bottom: 1px solid #e2e8f0;
  box-shadow: 0 1px 2px rgba(0, 0, 0, 0.03);
}

.burger {
  font-size: 20px;
  color: #64748b;
}

.top-title {
  margin-left: 24px;
  font-size: 15px;
  font-weight: 600;
}

.top-actions {
  margin-left: auto;
  display: flex;
  align-items: center;
  padding-top: 1px;
}

.sesi-btn {
  display: flex;
  align-items: center;
  gap: 4px;
  width: 86px;
  height: 23px;
  padding-left: 8px;
  border: 1px solid #0dcaf0;
  border-radius: 4px;
  color: #0dcaf0;
  font-size: 11.5px;
}

.lang {
  width: 34px;
  height: 25px;
  margin-left: 8px;
  border: 1px solid #e2e8f0;
  border-radius: 4px;
  font-size: 11.5px;
  font-weight: 600;
  line-height: 23px;
  text-align: center;
  color: #475569;
}

.bell {
  font-size: 18px;
  margin-left: 18px;
  color: #64748b;
}

.avatar {
  width: 34px;
  height: 34px;
  margin-left: 16px;
  border-radius: 50%;
  background: linear-gradient(135deg, #ea580c, #dc2626);
  color: #fff;
  font-size: 13px;
  font-weight: 700;
  display: flex;
  align-items: center;
  justify-content: center;
  gap: 3px;
}

.caret {
  border-top: 3.5px solid #fff;
  border-left: 3px solid transparent;
  border-right: 3px solid transparent;
}

.content {
  padding: 24px 25px 0 24px;
}

.crumb {
  font-size: 13px;
  font-weight: 500;
  line-height: 20px;
}

.greet {
  margin-top: 14px;
  font-size: 24px;
  font-weight: 700;
  line-height: 34px;
  color: #1e293b;
}

.greet-sub {
  margin-top: -2px;
  font-size: 13.1px;
  line-height: 18px;
  color: #64748b;
}

.stats {
  display: grid;
  grid-template-columns: repeat(6, 1fr);
  gap: 16px;
  margin-top: 25px;
}

.stat {
  height: 149px;
  padding: 16px 2px 0;
  border-radius: 12px;
  background: #fff;
  box-shadow: 0 1px 3px rgba(0, 0, 0, 0.05);
  text-align: center;
}

.stat-tile {
  width: 42px;
  height: 42px;
  margin: 0 auto;
  border-radius: 10px;
  display: flex;
  align-items: center;
  justify-content: center;
  font-size: 21px;
}

.stat-value {
  margin-top: 10px;
  font-size: 21px;
  font-weight: 700;
  line-height: 28px;
}

.stat-label {
  font-size: 12px;
  line-height: 18px;
  color: #64748b;
}

.stat-note {
  font-size: 10px;
  line-height: 16px;
  color: #94a3b8;
}

.row {
  display: grid;
  grid-template-columns: 356fr 250fr;
  gap: 16px;
  margin-top: 23px;
  height: 320px;
}

.panel {
  background: #fff;
  border-radius: 12px;
  box-shadow: 0 1px 3px rgba(0, 0, 0, 0.05);
  overflow: hidden;
}

.panel h3 {
  font-size: 14px;
  font-weight: 600;
}

.panel-head {
  display: flex;
  align-items: center;
}

.chart-head {
  height: 54px;
  padding-left: 20px;
  gap: 12px;
  border-bottom: 1px solid #f1f5f9;
}

.bars {
  font-size: 14px;
  color: #ea580c;
}

.chart {
  display: block;
}

.tick {
  font-family: "Liberation Sans", Arial, sans-serif;
  font-size: 12px;
  fill: #666;
}

.activity {
  border-radius: 12px 12px 0 0;
}

.act-head {
  height: 59px;
  padding: 0 20px;
}

.act-ic {
  font-size: 14px;
  color: #198754;
  margin-right: 12px;
}

.semua {
  display: flex;
  align-items: center;
  gap: 8px;
  margin-left: auto;
  width: 80px;
  height: 26px;
  padding-left: 10px;
  border: 1px solid #ea580c;
  border-radius: 4px;
  color: #ea580c;
  font-size: 12px;
}

.tbl {
  width: 270px;
  table-layout: fixed;
  border-collapse: collapse;
}

.tbl th {
  height: 28px;
  padding: 0 4px;
  background: #f8fafc;
  border-bottom: 2px solid #e2e8f0;
  font-size: 12px;
  font-weight: 700;
  letter-spacing: 0.5px;
  text-align: left;
  color: #64748b;
  white-space: nowrap;
}

.c-name {
  width: 148px;
}

.c-kelas {
  width: 51px;
}

.tbl td {
  height: 46.5px;
  padding: 4px;
  vertical-align: top;
  border-bottom: 1px solid #e2e8f0;
  font-size: 13px;
  line-height: 18.5px;
}

.tbl .name {
  color: #111827;
  font-weight: 500;
  white-space: nowrap;
  overflow: hidden;
  text-overflow: ellipsis;
}

.tbl .kelas {
  color: #64748b;
}

.aktif {
  display: inline-block;
  height: 19px;
  padding: 0 7px;
  margin-top: 2px;
  border-radius: 6px;
  background: #d1e7dd;
  color: #198754;
  font-size: 11px;
  font-weight: 700;
  line-height: 19px;
}

.subjects {
  display: flex;
  align-items: center;
  height: 60px;
  margin-top: 16px;
  padding: 0 20px 6px 19px;
  border-radius: 12px 12px 0 0;
}

.book {
  font-size: 16px;
  color: #ffc107;
  margin-right: 7px;
}

.tugasan {
  margin-left: auto;
  height: 18px;
  padding: 0 6px;
  border-radius: 6px;
  background: #fff3cd;
  color: #ffc107;
  font-size: 10.5px;
  font-weight: 700;
  line-height: 18px;
}

/* chat panel */
.chat {
  flex: 1;
  min-width: 0;
  display: flex;
  flex-direction: column;
  background: #f8fafc;
}

.chat-head {
  height: 65px;
  flex: none;
  padding: 3px 19px 0 20px;
  display: flex;
  align-items: center;
  background: #17496a;
}

.bot {
  width: 32px;
  height: 32px;
  border-radius: 8px;
  background: rgba(255, 255, 255, 0.16);
  display: flex;
  align-items: center;
  justify-content: center;
}

.chat-title {
  margin-left: 10px;
  font-size: 15px;
  font-weight: 600;
  color: #fff;
}

.trash {
  margin-left: auto;
}

.close {
  margin-left: 18px;
}

.chat-body {
  flex: 1;
  min-height: 0;
  padding: 17px 20px 0 19px;
  border-left: 1px solid #e2e8f0;
}

.bubble {
  width: 323px;
  height: 111px;
  padding: 10px 14px;
  background: #fff;
  border: 1px solid #e8edf3;
  border-radius: 14px 14px 14px 4px;
  box-shadow: 0 1px 2px rgba(0, 0, 0, 0.04);
  font-size: 13px;
  line-height: 21px;
  color: #334155;
}

.bubble p + p {
  margin-top: 6px;
}

.bubble b {
  font-weight: 600;
  color: #1e293b;
}

.wave {
  vertical-align: -2px;
}

.faq-title {
  margin: 13px 0 0 8px;
  font-size: 11px;
  line-height: 14px;
  color: #a0aec0;
}

.cat {
  height: 32px;
  padding: 0 6px 0 14px;
  display: flex;
  align-items: center;
  font-size: 12px;
  font-weight: 600;
  color: #334155;
}

.cat.first {
  margin-top: 2px;
}

.emoji {
  width: 13px;
  height: 13px;
  flex: none;
  margin-right: 5px;
}

.tight .emoji {
  width: 11px;
  height: 11px;
  margin: 0 1px 0 -1px;
}

.cat-label {
  flex: 1;
}

.tri {
  width: 0;
  height: 0;
  border-left: 7px solid #94a3b8;
  border-top: 4px solid transparent;
  border-bottom: 4px solid transparent;
}

.tri.down {
  border-top: 7px solid #94a3b8;
  border-left: 4px solid transparent;
  border-right: 4px solid transparent;
  border-bottom: 0;
}

.chips {
  display: flex;
  flex-direction: column;
  align-items: flex-start;
  gap: 4px;
  padding: 2px 0 7px 12px;
}

.chip {
  height: 26px;
  padding: 0 12px;
  border: 1px solid #cbd5e1;
  border-radius: 13px;
  background: #fff;
  font-size: 11px;
  line-height: 24px;
  color: #334155;
}

.composer {
  height: 60px;
  flex: none;
  display: flex;
  padding: 13px 10px 0 16px;
  gap: 8px;
  background: #fff;
  border-top: 1px solid #e2e8f0;
}

.input {
  width: 311px;
  height: 42px;
  padding: 0 14px;
  border: 1px solid #cbd5e1;
  border-radius: 10px;
  font-size: 13px;
  line-height: 40px;
  color: #7b8794;
}

.send {
  width: 48px;
  height: 42px;
  margin-top: 2px;
  border-radius: 8px;
  background: #164462;
}

.fab {
  position: absolute;
  right: 14px;
  bottom: 11px;
  width: 56px;
  height: 56px;
  border-radius: 50%;
  background: #164462;
  box-shadow: 0 2px 6px rgba(0, 0, 0, 0.15);
  display: flex;
  align-items: center;
  justify-content: center;
}

.cursor {
  position: absolute;
  left: 1233px;
  top: 542px;
}
</style>
